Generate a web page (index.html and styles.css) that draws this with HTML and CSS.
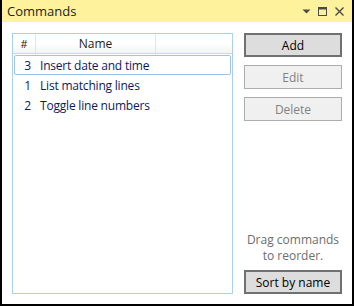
FILE: index.html
```
<!DOCTYPE html>
<html lang="en">
<head>
  <meta charset="UTF-8">
  <title>Commands</title>
  <link rel="stylesheet" href="styles.css">
</head>
<body>
  <div class="window">
    <div class="titlebar">
      <span class="title">Commands</span>
      <div class="title-icons">
        <svg width="9" height="10" viewBox="0 0 9 10"><path d="M0.5 3.5h8L4.5 7.5z" fill="#4a4a4a"/></svg>
        <svg width="11" height="11" viewBox="0 0 11 11"><rect x="1.5" y="1.5" width="8" height="8" fill="none" stroke="#4a4a4a" stroke-width="1"/><rect x="1" y="1" width="9" height="2.5" fill="#4a4a4a"/></svg>
        <svg width="11" height="11" viewBox="0 0 11 11"><path d="M1.5 1.5l8 8M9.5 1.5l-8 8" stroke="#4a4a4a" stroke-width="1.4"/></svg>
      </div>
    </div>

    <div class="content">
      <div class="list">
        <div class="list-head">
          <div class="col-num">#</div>
          <div class="col-name">Name</div>
          <div class="col-rest"></div>
        </div>
        <div class="row selected"><span class="num">3</span><span>Insert date and time</span></div>
        <div class="row"><span class="num">1</span><span>List matching lines</span></div>
        <div class="row"><span class="num">2</span><span>Toggle line numbers</span></div>
      </div>

      <div class="side">
        <button class="btn">Add</button>
        <button class="btn" disabled>Edit</button>
        <button class="btn" disabled>Delete</button>
        <div class="hint">Drag commands<br>to reorder.</div>
        <button class="btn">Sort by name</button>
      </div>
    </div>
  </div>
</body>
</html>
```

FILE: styles.css
```
body {
  margin: 0;
  font-family: "Open Sans", "Noto Sans", sans-serif;
  font-size: 11.5px;
  color: #1e1e1e;
}

.window {
  width: 354px;
  height: 306px;
  box-sizing: border-box;
  border: 2px solid #000;
  border-top: 0;
  display: flex;
  flex-direction: column;
  background: #fff;
}

.titlebar {
  height: 22px;
  background: #fff29d;
  display: flex;
  align-items: center;
  padding: 0 7px 0 5px;
  flex-shrink: 0;
}

.title {
  flex: 1;
  font-size: 13px;
  color: #1e1e1e;
}

.title-icons {
  display: flex;
  align-items: center;
  gap: 6px;
}

.title-icons svg {
  display: block;
}

.content {
  flex: 1;
  display: flex;
  gap: 11px;
  padding: 11px 10px 10px 10px;
  min-height: 0;
}

.list {
  width: 221px;
  box-sizing: border-box;
  border: 1px solid #abd2ea;
  padding: 0 1px;
}

.list-head {
  display: flex;
  height: 19px;
  background: linear-gradient(#fff, #fff 50%, #f2f3f5);
  border-bottom: 1px solid #d5d5d5;
  margin: 0 -1px;
}

.list-head div {
  display: flex;
  align-items: center;
  justify-content: center;
  border-right: 1px solid #e3e5e8;
  color: #1e1e1e;
}

.col-num { width: 22px; font-size: 11px; }
.col-name { width: 119px; font-size: 12px; }
.col-rest { flex: 1; border-right: 0 !important; }

.row {
  display: flex;
  align-items: center;
  box-sizing: border-box;
  height: 20px;
  font-size: 12px;
  letter-spacing: -0.2px;
  color: #0c1a5c;
  border: 1px solid transparent;
  border-radius: 2px;
}

.row.selected {
  border-color: #9ec3e6;
  margin-top: 1px;
}

.num {
  width: 25px;
  text-align: center;
  flex-shrink: 0;
}

.side {
  width: 98px;
  display: flex;
  flex-direction: column;
}

.btn {
  font: inherit;
  font-size: 12px;
  height: 24px;
  margin: 0 0 8px 0;
  padding: 0;
  background: #dddddd;
  border: 1px solid #707070;
  box-shadow: inset 0 0 0 1px #707070;
  color: #000;
}

.btn:disabled {
  background: #f0f0f0;
  border-color: #adadad;
  box-shadow: none;
  color: #838383;
}

.btn:last-child {
  margin-bottom: 0;
}

.hint {
  margin-top: auto;
  margin-bottom: 6px;
  text-align: center;
  font-size: 12px;
  color: #6d6d6d;
  line-height: 16px;
}
```
